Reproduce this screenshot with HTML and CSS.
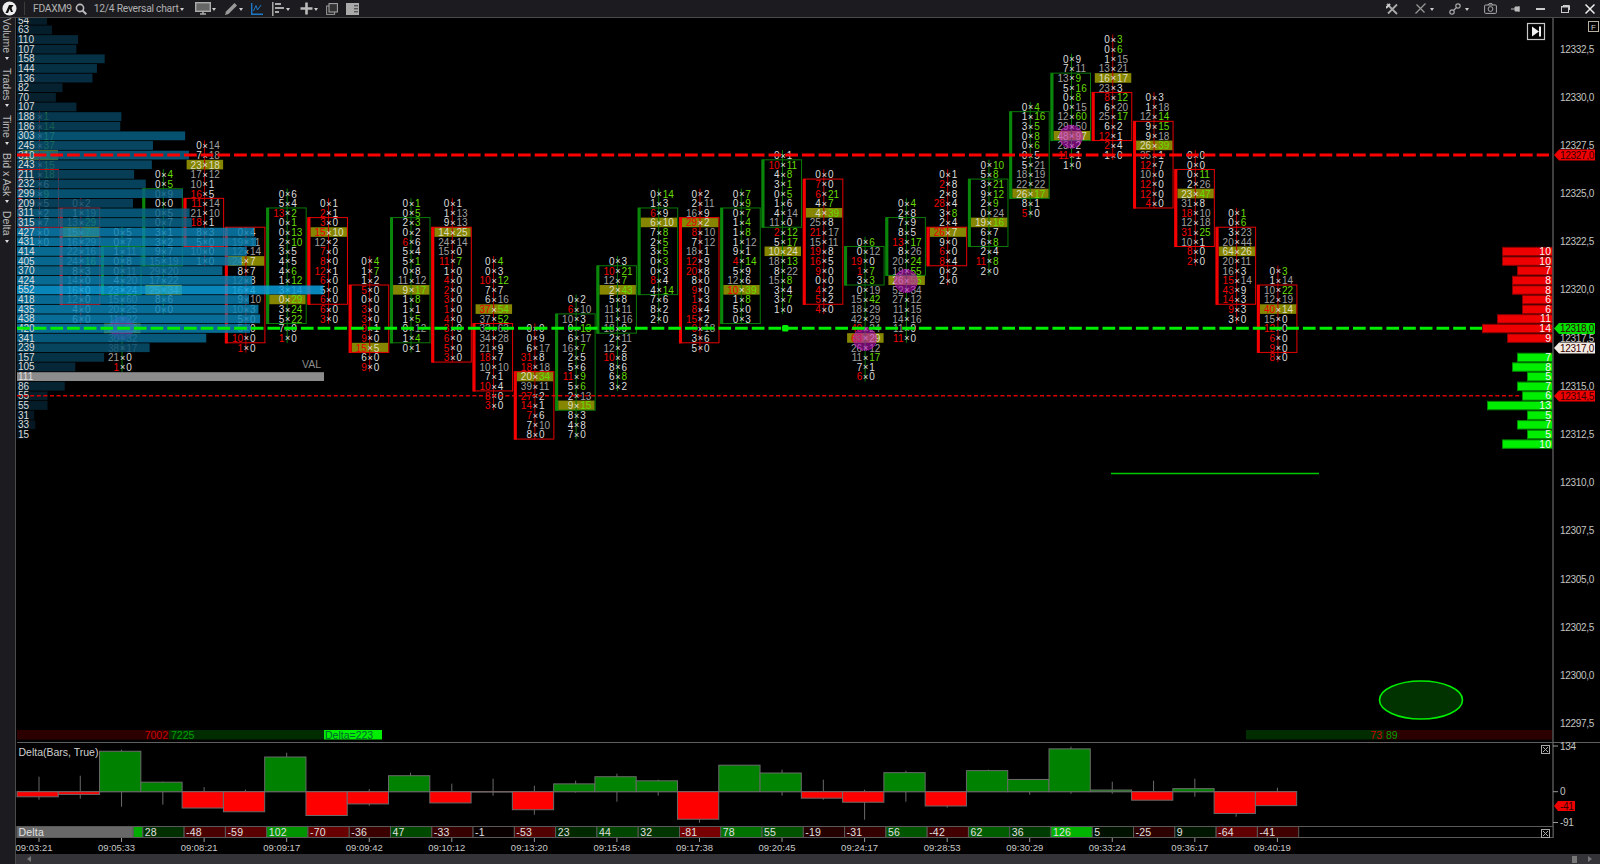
FILE: index.html
```html
<!DOCTYPE html>
<html lang="en">
<head>
    <meta charset="UTF-8">
    <title>FDAXM9 - 12/4 Reversal chart</title>
    <link rel="stylesheet" href="styles.css">
</head>
<body>

    <!-- Top toolbar -->
    <div class="toolbar">
        <svg class="logo" width="15" height="15" viewBox="0 0 15 15"><circle cx="7.5" cy="7.5" r="7" fill="#eee"/><path d="M3.5 12 L7 4 H11.5 L9.5 7 L11 11 H9 L7.7 8 L6 12 Z" fill="#111"/></svg>
        <span class="divider"></span>
        <span class="symbol">FDAXM9</span>
        <svg class="ic-search" width="12" height="12" viewBox="0 0 12 12"><circle cx="5" cy="5" r="3.6" fill="none" stroke="#bbb" stroke-width="1.6"/><path d="M7.5 7.5 L11.3 11.3" stroke="#bbb" stroke-width="2"/></svg>
        <span class="chart-type">12/4 Reversal chart</span><i class="caret"></i>
        <svg class="ic-monitor" width="16" height="13" viewBox="0 0 16 13"><rect x="0.7" y="0.7" width="14.6" height="8.6" fill="#666" stroke="#aaa" stroke-width="1.4"/><path d="M5 12 H11 M8 10 V12" stroke="#aaa" stroke-width="1.6"/></svg><i class="caret"></i>
        <svg class="ic-pencil" width="14" height="14" viewBox="0 0 14 14"><path d="M1 13 L2 9.5 L10.5 1 L13 3.5 L4.5 12 Z" fill="#999"/></svg><i class="caret"></i>
        <svg class="ic-chart" width="12" height="12" viewBox="0 0 12 12"><path d="M0.7 0 V11.3 H12" fill="none" stroke="#1e78c8" stroke-width="1.4"/><path d="M2.5 8 L5 2.5 L6.5 7 L10 2" fill="none" stroke="#1e78c8" stroke-width="1"/></svg>
        <svg class="ic-align" width="13" height="14" viewBox="0 0 13 14"><path d="M0.8 0 V14" stroke="#aaa" stroke-width="1.5"/><path d="M3 2 H9 M3 6 H12 M3 10 H7" stroke="#aaa" stroke-width="2"/></svg><i class="caret"></i>
        <svg class="ic-plus" width="13" height="13" viewBox="0 0 13 13"><path d="M6.5 0.5 V12.5 M0.5 6.5 H12.5" stroke="#bbb" stroke-width="2.6"/></svg><i class="caret"></i>
        <svg class="ic-copy" width="12" height="12" viewBox="0 0 12 12"><rect x="0.6" y="3" width="8" height="8.4" fill="#222" stroke="#999"/><rect x="3" y="0.6" width="8.4" height="8.4" fill="#333" stroke="#aaa"/></svg>
        <svg class="ic-panel" width="13" height="12" viewBox="0 0 13 12"><rect width="13" height="12" fill="#aaa"/><rect x="8" y="2" width="4" height="1.4" fill="#555"/><rect x="8" y="5" width="4" height="1.4" fill="#555"/><rect x="8" y="8" width="4" height="1.4" fill="#555"/></svg>

        <span class="toolbar-right">
            <svg class="ic-tools" width="12" height="12" viewBox="0 0 12 12"><path d="M1 1 L11 11 M11 1.5 L2 10.5" stroke="#aaa" stroke-width="1.8"/><path d="M0 5 L4 1" stroke="#ccc" stroke-width="2"/></svg>
            <svg class="ic-cross" width="11" height="11" viewBox="0 0 11 11"><path d="M0.5 10.5 L10.5 0.5 M1.5 1.5 L9.5 9.5" stroke="#999" stroke-width="1.2"/></svg><i class="caret"></i>
            <svg class="ic-link" width="12" height="12" viewBox="0 0 12 12"><circle cx="3" cy="9" r="2.2" fill="none" stroke="#aaa" stroke-width="1.2"/><circle cx="9" cy="3" r="2.2" fill="none" stroke="#aaa" stroke-width="1.2"/><path d="M4.5 7.5 L7.5 4.5" stroke="#aaa" stroke-width="1.2"/></svg><i class="caret"></i>
            <svg class="ic-camera" width="13" height="11" viewBox="0 0 13 11"><rect x="0.6" y="2" width="11.8" height="8.4" rx="1" fill="none" stroke="#aaa"/><circle cx="6.5" cy="6" r="2.4" fill="none" stroke="#aaa"/><path d="M4 2 L5 0.6 H8 L9 2" fill="none" stroke="#aaa"/></svg>
            <svg class="ic-pin" width="10" height="6" viewBox="0 0 10 6"><path d="M0 3 H4 M4 1 H8 V5 H4 Z M8 0 V6" stroke="#bbb" fill="#bbb"/></svg>
            <span class="win-min"></span>
            <svg class="ic-restore" width="9" height="8" viewBox="0 0 9 8"><rect x="0.5" y="1.5" width="7" height="6" fill="none" stroke="#ccc"/><path d="M0.5 2 H7.5 M2 0.5 H8.5 V5" fill="none" stroke="#ccc"/></svg>
            <svg class="ic-close" width="10" height="10" viewBox="0 0 10 10"><path d="M0.5 0.5 L9.5 9.5 M9.5 0.5 L0.5 9.5" stroke="#eee" stroke-width="1.5"/></svg>
        </span>
    </div>

    <div class="workspace">
        <!-- Left vertical tabs -->
        <div class="sidebar">
            <span class="tab tab-volume">Volume</span><i class="caret"></i>
            <span class="tab">Trades</span><i class="caret"></i>
            <span class="tab">Time</span><i class="caret"></i>
            <span class="tab">Bid x Ask</span><i class="caret"></i>
            <span class="tab">Delta</span><i class="caret"></i>
        </div>

        <div class="main">
            <!-- viewBoxes use page coordinates, script.js draws into them -->
            <svg id="chart" class="chart" viewBox="16 18 1584 724" width="1584" height="724"></svg>
            <svg id="delta" class="delta" viewBox="16 742 1584 96" width="1584" height="96"></svg>
            <svg id="timeaxis" class="timeaxis" viewBox="16 838 1584 16" width="1584" height="16"></svg>
            <div class="scrollbar">
                <i class="arrow-left"></i>
                <span class="scroll-thumb"></span>
                <i class="arrow-right"></i>
            </div>
        </div>
    </div>

    <script src="script.js"></script>
</body>
</html>
```

FILE: styles.css
```css
/* Base page */
html, body {
    margin: 0;
    padding: 0;
    height: 864px;
    overflow: hidden;
    background-color: #000;
    font-family: "Liberation Sans", Arial, sans-serif;
}

/* Toolbar */
.toolbar {
    display: flex;
    align-items: center;
    height: 17px;
    background-color: #1c1c20;
    border-bottom: 1px solid #4a4a4a;
    color: #b0b0b0;
    padding-left: 2px;
}
.divider {
    width: 1px;
    height: 13px;
    background-color: #3c3c3c;
    margin-left: 7px;
}
.symbol, .chart-type {
    font-family: Roboto, sans-serif;
    font-size: 10.3px;
    letter-spacing: -0.25px;
}
.symbol { margin-left: 8px; }
.ic-search { margin-left: 3px; }
.chart-type { margin-left: 7px; }
.caret {
    width: 0;
    height: 0;
    border-left: 2.5px solid transparent;
    border-right: 2.5px solid transparent;
    border-top: 3px solid #ccc;
    margin-left: 1px;
    margin-top: 2px;
}
.ic-monitor { margin-left: 11px; }
.ic-pencil { margin-left: 8px; }
.ic-chart { margin-left: 8px; }
.ic-align { margin-left: 9px; }
.ic-plus { margin-left: 10px; }
.ic-copy { margin-left: 8px; }
.ic-panel { margin-left: 8px; }
.toolbar-right {
    display: flex;
    align-items: center;
    margin-left: auto;
    padding-right: 5px;
}
.ic-cross { margin-left: 17px; }
.ic-cross + .caret { margin-left: 4px; }
.ic-link { margin-left: 15px; }
.ic-link + .caret { margin-left: 4px; }
.ic-camera { margin-left: 15px; }
.ic-pin { margin-left: 14px; }
.win-min {
    width: 9px;
    height: 2px;
    background-color: #ccc;
    margin-left: 15px;
}
.ic-restore { margin-left: 16px; }
.ic-close { margin-left: 15px; }

/* Layout under the toolbar */
.workspace {
    display: flex;
    height: 846px;
}
.sidebar {
    display: flex;
    flex-direction: column;
    align-items: center;
    flex: none;
    width: 16px;
    padding-right: 2px;
    box-sizing: border-box;
    background-color: #1c1c20;
    border-right: 1px solid #4a4a4a;
}
.tab {
    writing-mode: vertical-rl;
    font-size: 10.5px;
    color: #b8b8b8;
    margin-top: 8px;
}
.tab-volume { margin-top: 0; }
.sidebar .caret {
    border-top-color: #ddd;
    margin: 4px 0 0;
}
.main {
    display: flex;
    flex-direction: column;
    width: 1584px;
}
.chart, .delta, .timeaxis { display: block; }
.scrollbar {
    display: flex;
    align-items: center;
    height: 10px;
    background-color: #333338;
}
.arrow-left {
    border-top: 3.5px solid transparent;
    border-bottom: 3.5px solid transparent;
    border-right: 4px solid #777;
    margin-left: 11px;
}
.scroll-thumb {
    width: 5px;
    height: 7px;
    background-color: #777;
    margin-left: auto;
}
.arrow-right {
    border-top: 3.5px solid transparent;
    border-bottom: 3.5px solid transparent;
    border-left: 4px solid #777;
    margin: 0 8px 0 11px;
}

/* Chart text */
text { font-family: "Liberation Sans", Arial, sans-serif; }
.num { font-size: 10px; fill: #dcdcdc; }
.num-dim { fill: #a0a0a0; }
.num-hi { fill: #dcdcc0; }
.num-red { fill: #f00000; }
.num-lime { fill: #66dd00; }
.cross { font-size: 9px; fill: #e0e0e0; }
.wick-g { stroke: #0a7a0a; }
.wick-r { stroke: #c00000; }
.box-g { fill: none; stroke: #0a7a0a; }
.box-r { fill: none; stroke: #e80000; }
.bar-g { fill: #0a860a; }
.bar-r { fill: #f40000; }
.hi { fill: #868600; }
.poc { fill: rgba(190, 20, 190, 0.58); stroke: #c818c8; stroke-dasharray: 1 1; }

.profile-label { font-size: 10px; fill: #dcdcdc; }
.val { font-size: 10.5px; fill: #8c8c8c; }
.line-red { stroke: #ff0000; stroke-width: 3.2; stroke-dasharray: 12.7 4; }
.line-green { stroke: #00ee00; stroke-width: 3; stroke-dasharray: 12.7 4; }
.line-thin { stroke: #d80000; stroke-width: 1.6; stroke-dasharray: 4 2.6; }
.line-draw { stroke: #00c800; stroke-width: 1.6; }
.oval { fill: #003300; stroke: #00ee00; stroke-width: 1.6; }

.axis-line { stroke: #5a5a5a; stroke-width: 1.4; }
.axis-label { font-size: 10px; letter-spacing: -0.3px; fill: #c4c4c0; }
.tag-text { font-size: 10px; letter-spacing: -0.3px; fill: #300; }
.tag-red { fill: #ee0000; }
.tag-green { fill: #00e000; }
.tag-white { fill: #f3ece4; }
.vol-red { fill: #ee0000; stroke: #8a0000; }
.vol-green { fill: #00ee00; stroke: #008a00; }
.vol-text { font-size: 10.5px; fill: #f4f4f4; text-anchor: end; }

.sum-red { fill: #2c0000; }
.sum-green { fill: #002c00; }
.sum-delta { fill: #00ee00; }
.sum-text { font-size: 10.5px; }
.sum-text-red { fill: #cc0000; }
.sum-text-green { fill: #00a000; }
.sum-text-dark { fill: #063; }
.btn-frame { fill: #000; stroke: #c8c8c8; stroke-width: 1.2; }
.btn-glyph { fill: #f0f0f0; }
.f-frame { fill: #000; stroke: #b8b0a0; }
.f-text { font-size: 8px; fill: #ccc; }

/* Delta panel */
.sep { stroke: #606060; stroke-width: 1; }
.panel-title { font-size: 10.5px; fill: #d0d0d0; }
.dbar { stroke: #6a6a6a; stroke-width: 1; }
.dwick { stroke: #6a6a6a; stroke-width: 1; }
.cell { stroke: #5a5a5a; stroke-width: 1; }
.cell-label { fill: #686868; }
.cell-text { font-size: 10.5px; letter-spacing: 0.2px; fill: #e0e0e0; }
.close-frame { fill: #000; stroke: #aaa; }
.close-x { stroke: #aaa; }

.tick { stroke: #999; }
.time-label { font-size: 9.5px; fill: #c8c8c8; text-anchor: middle; }
```

FILE: script.js
```js
var NS = "http://www.w3.org/2000/svg";
var chart = document.getElementById("chart");
var delta = document.getElementById("delta");
var timeaxis = document.getElementById("timeaxis");

function add(parent, tag, cls, attrs, label) {
    var node = document.createElementNS(NS, tag);
    if (cls) node.setAttribute("class", cls);
    for (var k in attrs) node.setAttribute(k, attrs[k]);
    if (label !== undefined) node.textContent = label;
    parent.appendChild(node);
    return node;
}

// row n sits 9.63px under the 12327,0 level
function rowY(n) { return 155 + 9.63 * n; }
function colX(i) { return 39 + 41.28 * i; }

// [direction, first row, box top, box bottom, highlighted row, "bid/ask" per row]
// r and g in front of a number mean a red or lime number
var columns = [
    ["r", -4, 1.5, 7.5, 0, "/g1 /g14 /g17 /g37 /g3 /g15 /g18 /6 /g9 /5 /2 /7 /0 /0"],
    ["r", 5, 5.5, 15.5, 8, "0/2 1/19 13/g29 15/g7 16/29 22/16 24/g16 8/3 14/0 16/0 12/0 4/0 6/0"],
    ["g", 8, 9.5, 14.5, 18, "0/5 0/7 1/11 0/8 0/11 4/20 23/24 15/60 20/25 11/22 38/29 30/32 38/17 21/0 r1/0"],
    ["g", 2, 3.5, 11.5, 14, "0/g4 0/g5 0/9 0/0 0/5 0/7 3/1 3/2 9/7 15/19 29/20 17/22 25/34 8/6 0/0"],
    ["r", -1, 4.5, 9.5, 1, "0/14 7/18 23/18 17/12 10/1 r16/5 r11/14 21/10 r18/1 8/3 5/0 10/0 1/0"],
    ["r", 8, 7.5, 19.5, 11, "0/4 19/11 12/14 24/7 8/7 12/8 16/4 9/10 10/3 5/0 5/0 r10/0 r1/0"],
    ["g", 4, 5.5, 17.5, 15, "0/6 5/4 r13/g2 0/g1 0/g13 2/g10 3/5 4/5 4/g6 1/g12 3/14 0/g29 3/g24 5/g22 7/0 r1/0"],
    ["r", 5, 6.5, 15.5, 8, "0/1 r2/1 r3/0 r15/10 12/2 r7/0 r8/0 r12/1 r6/0 5/0 r6/0 r6/0 r3/0"],
    ["r", 11, 13.5, 20.5, 20, "0/g4 1/g7 1/2 r5/0 0/0 r3/0 r3/0 r9/1 r9/0 r15/5 6/0 r9/0"],
    ["g", 5, 6.5, 19.5, 14, "0/g1 0/g5 2/g3 0/2 r6/6 5/4 5/g1 0/8 11/12 9/g17 1/g8 1/1 1/g5 0/12 1/g4 0/1"],
    ["r", 5, 7.5, 21.5, 8, "0/1 1/13 9/13 14/25 24/14 15/0 r11/g7 1/0 r4/0 r2/0 r3/0 r1/0 r4/0 r3/0 r6/0 r5/0 r3/0"],
    ["r", 11, 17.5, 24.5, 16, "0/g4 0/3 r10/g12 7/7 6/16 r37/g54 37/g52 33/63 34/28 21/9 r18/7 10/10 7/1 r10/4 r8/0 r3/0"],
    ["r", 18, 22.5, 29.5, 23, "0/0 0/9 6/17 r31/8 r18/18 20/g34 39/11 r27/2 r14/1 r7/6 7/10 8/0"],
    ["g", 15, 16.5, 26.5, 26, "0/2 r6/10 10/3 0/g13 6/17 16/g7 2/5 5/6 r11/g9 5/g6 2/13 9/g15 8/3 4/8 7/0"],
    ["g", 11, 11.5, 18.5, 14, "0/3 r10/g21 12/g7 2/g43 5/8 11/11 11/16 18/9 2/11 12/2 r10/8 8/6 6/g8 3/2"],
    ["g", 4, 5.5, 14.5, 7, "0/g14 1/3 r6/9 6/10 7/g8 2/g5 3/g5 0/g3 0/3 r8/4 4/g14 7/6 8/2 2/0"],
    ["r", 4, 6.5, 19.5, 7, "0/2 2/11 16/9 r29/2 r8/10 7/12 18/1 r12/9 r20/8 8/0 r9/0 r1/3 r8/4 r15/2 r9/18 3/6 5/0"],
    ["g", 4, 5.5, 17.5, 14, "0/g7 0/g9 0/g7 1/g4 1/g8 1/12 9/1 r4/g14 5/9 12/6 r10/g39 1/g8 5/0 0/3"],
    ["g", 0, 0.5, 7.5, 10, "0/1 r10/g11 4/g8 3/g1 0/g5 1/6 4/14 11/0 r2/g12 5/g17 10/24 18/g13 8/22 15/g8 3/4 3/g7 1/0"],
    ["r", 2, 2.5, 15.5, 6, "0/0 r7/0 r6/g21 4/g7 4/g39 25/8 r21/17 15/11 r19/8 r16/5 r9/0 0/0 r4/2 r5/2 r4/0"],
    ["g", 9, 9.5, 13.5, 19, "0/g6 0/12 r19/0 r1/g7 3/g3 0/19 15/g42 18/29 42/29 r40/24 r63/29 26/12 11/g17 7/1 r6/0"],
    ["g", 5, 6.5, 12.5, 13, "0/g4 2/8 7/9 8/5 r13/g17 8/26 20/g24 19/g55 26/g55 52/34 27/12 11/15 14/16 11/9 r11/0"],
    ["r", 2, 7.5, 11.5, 8, "0/1 r2/8 2/8 r28/4 3/g8 2/4 r26/7 9/0 r6/0 r8/4 0/2 2/0"],
    ["g", 1, 2.5, 9.5, 7, "0/g10 5/g8 3/g21 9/g12 2/g9 0/24 19/g16 6/7 6/g8 2/4 r11/g8 2/0"],
    ["g", -5, -4.5, 4.5, 4, "0/g4 1/g16 3/g5 0/g8 0/g6 0/5 5/21 18/19 22/22 26/g17 8/1 r5/0"],
    ["g", -10, -8.5, -1.5, -2, "0/9 7/11 13/g9 5/g16 0/g8 0/15 12/g60 29/50 48/97 23/2 r11/1 1/0"],
    ["r", -12, -6.5, -1.5, -8, "0/g3 0/g6 1/15 13/21 16/17 23/3 r8/g12 6/20 25/g17 6/2 r12/1 r2/4 1/0"],
    ["r", -6, -3.5, 5.5, -1, "0/3 1/18 12/g14 9/g15 9/18 26/g39 35/1 r12/7 10/0 r12/0 r12/0 r4/0"],
    ["r", 0, 1.5, 9.5, 4, "0/0 0/0 0/g11 2/26 23/g47 31/8 r18/10 12/18 r31/g25 10/1 r8/0 r2/0"],
    ["r", 6, 7.5, 15.5, 10, "0/g1 0/g6 3/23 20/44 64/26 20/11 16/3 r15/14 r43/9 r14/3 r9/3 3/0"],
    ["r", 12, 13.5, 20.5, 16, "0/g3 1/14 10/g22 12/19 r40/14 15/0 r12/0 r6/0 r9/0 r8/0"]
];

// number with its colour class
function addNum(g, token, x, y, anchor, isHi) {
    if (token === "") return;
    var cls = "num";
    var value = token;
    if (token[0] === "r") { cls += " num-red"; value = token.slice(1); }
    else if (token[0] === "g") { cls += " num-lime"; value = token.slice(1); }
    else if (isHi) { cls += " num-hi"; }
    else if (parseInt(token) >= 10) { cls += " num-dim"; }
    add(g, "text", cls, { x: x, y: y, "text-anchor": anchor }, value);
}

function drawColumn(col, i) {
    var g = add(chart, "g", "column");
    var cx = colX(i);
    var rows = col[5].split(" ");
    var first = col[1];
    var dir = col[0];
    var left = cx - 20.5;
    var right = cx + 19;

    // highlighted row under everything
    var hiY = rowY(col[4]);
    add(g, "rect", "hi", { x: cx - 17.5, y: hiY - 4.8, width: 36.5, height: 9.6 });

    // wick
    add(g, "line", "wick-" + dir, {
        x1: cx + 0.5, x2: cx + 0.5,
        y1: rowY(first) - 5, y2: rowY(first + rows.length - 1) + 5
    });

    // body
    var top = rowY(col[2]);
    var bottom = rowY(col[3]);
    add(g, "rect", "box-" + dir, { x: left + 0.5, y: top, width: right - left, height: bottom - top });
    add(g, "rect", "bar-" + dir, { x: left, y: top, width: 3, height: bottom - top + 0.5 });

    for (var r = 0; r < rows.length; r++) {
        var y = rowY(first + r) + 4;
        var parts = rows[r].split("/");
        var isHi = first + r === col[4];
        addNum(g, parts[0], cx - 2.4, y, "end", isHi);
        add(g, "text", "cross", { x: cx + 1, y: y - 0.5, "text-anchor": "middle" }, "\u00d7");
        addNum(g, parts[1], cx + 4.6, y, "start", isHi);
    }
}

// purple marks, they go on top of the columns but under the profile
function drawMarks() {
    var marks = [[122, 328], [865, 339], [906, 281], [1071, 136.7]];
    marks.forEach(function (m) {
        add(chart, "circle", "poc", { cx: m[0], cy: m[1], r: 11.5 });
    });
}

var profile = [54, 63, 110, 107, 158, 144, 136, 82, 70, 107, 188, 186, 303, 245, 310, 243, 211, 232, 299, 209,
    311, 315, 427, 431, 414, 405, 370, 424, 552, 418, 435, 438, 420, 341, 239, 157, 105, 111, 86, 55, 55, 31, 33, 15];

function drawProfile() {
    var first = -14;
    var valRow = 23;
    profile.forEach(function (v, k) {
        var n = first + k;
        var y = rowY(n);
        var t = v / 552;
        var fill = "rgba(" + Math.round(6 + 4 * t) + "," + Math.round(20 + 140 * t) + "," + Math.round(30 + 190 * t) + ",0.84)";
        var width = v * 0.555;
        if (n === valRow) {
            fill = "#8c8c8c";
            width = 307;
        }
        add(chart, "rect", "", { x: 17, y: y - 4.3, width: width, height: 8.8, fill: fill });
    });
    profile.forEach(function (v, k) {
        add(chart, "text", "profile-label", { x: 18, y: rowY(first + k) + 3.6 }, v);
    });
    add(chart, "text", "val", { x: 302, y: 368 }, "VAL");
}

function drawLevels() {
    add(chart, "line", "line-red", { x1: 17, x2: 1549, y1: rowY(0), y2: rowY(0) });
    add(chart, "line", "line-green", { x1: 17, x2: 1483, y1: 328.3, y2: 328.3 });
    add(chart, "line", "line-thin", { x1: 17, x2: 1522, y1: 395.8, y2: 395.8 });
    add(chart, "rect", "", { x: 782, y: 325, width: 6.5, height: 6.5, rx: 1.5, fill: "#00ee00" });
    add(chart, "line", "line-draw", { x1: 1111, x2: 1319, y1: 473.5, y2: 473.5 });
    add(chart, "ellipse", "oval", { cx: 1421, cy: 700, rx: 41.5, ry: 19 });
}

// volume bars at the right side of the chart
function drawRightVolume() {
    var red = [10, 10, 7, 8, 8, 6, 6, 11, 14, 9];
    var green = [7, 8, 5, 7, 6, 13, 5, 7, 5, 10];
    function bar(v, n, cls) {
        var y = rowY(n);
        add(chart, "rect", cls, { x: 1552.5 - v * 5, y: y - 4, width: v * 5, height: 8.4 });
        add(chart, "text", "vol-text", { x: 1551, y: y + 3.7 }, v);
    }
    red.forEach(function (v, k) { bar(v, 10 + k, "vol-red"); });
    green.forEach(function (v, k) { bar(v, 21 + k, "vol-green"); });
}

function drawTag(y, label, cls) {
    var pts = "1554," + y + " 1559," + (y - 5.5) + " 1595," + (y - 5.5) + " 1595," + (y + 5.5) + " 1559," + (y + 5.5);
    add(chart, "polygon", cls, { points: pts });
    add(chart, "text", "tag-text", { x: 1560, y: y + 3.6 }, label);
}

function drawPriceAxis() {
    add(chart, "line", "axis-line", { x1: 1553, x2: 1553, y1: 18, y2: 742 });
    var labels = [["12332,5", 49], ["12330,0", 97], ["12327,5", 145], ["12325,0", 193], ["12322,5", 241],
        ["12320,0", 289.5], ["12317,5", 338], ["12315,0", 386], ["12312,5", 434], ["12310,0", 482],
        ["12307,5", 530.5], ["12305,0", 579], ["12302,5", 627], ["12300,0", 675], ["12297,5", 723]];
    labels.forEach(function (l) {
        add(chart, "text", "axis-label", { x: 1560, y: l[1] + 3.6 }, l[0]);
    });
    drawTag(155, "12327,0", "tag-red");
    drawTag(328.5, "12318,0", "tag-green");
    drawTag(348, "12317,0", "tag-white");
    drawTag(396, "12314,5", "tag-red");
}

function drawSummary() {
    add(chart, "rect", "sum-red", { x: 17, y: 730, width: 152, height: 9.5 });
    add(chart, "rect", "sum-green", { x: 169, y: 730, width: 155, height: 9.5 });
    add(chart, "rect", "sum-delta", { x: 324, y: 730, width: 58, height: 9.5 });
    add(chart, "text", "sum-text sum-text-red", { x: 168, y: 739, "text-anchor": "end" }, "7002");
    add(chart, "text", "sum-text sum-text-green", { x: 171, y: 739 }, "7225");
    add(chart, "text", "sum-text sum-text-dark", { x: 325, y: 739 }, "Delta=223");

    add(chart, "rect", "sum-green", { x: 1246, y: 730, width: 138, height: 9.5 });
    add(chart, "rect", "sum-red", { x: 1384, y: 730, width: 168, height: 9.5 });
    add(chart, "text", "sum-text sum-text-red", { x: 1382, y: 739, "text-anchor": "end" }, "73");
    add(chart, "text", "sum-text sum-text-green", { x: 1386, y: 739 }, "89");
}

function drawButtons() {
    add(chart, "rect", "btn-frame", { x: 1527.5, y: 23.5, width: 17, height: 16 });
    add(chart, "polygon", "btn-glyph", { points: "1532,26.5 1539,31.5 1532,36.5" });
    add(chart, "rect", "btn-glyph", { x: 1539, y: 26.5, width: 2, height: 10 });
    add(chart, "rect", "f-frame", { x: 1588.5, y: 21.5, width: 10, height: 10 });
    add(chart, "text", "f-text", { x: 1591, y: 29.5 }, "F");
}

// delta indicator: [value, wick above zero, wick below zero]
var deltaBars = [[-15, 15, 8], [-8, 16, 7], [119, 42, 15], [28, 10, 13], [-48, 4.5, 0], [-59, 2, 0], [102, 39, 0],
    [-70, 0, 0], [-36, 2.5, 14], [47, 19, 0], [-33, 8, 0], [-1, 13, 4], [-53, 6, 23], [23, 11, 1], [44, 18, 10],
    [32, 12, 4], [-81, 0, 31], [78, 0, 0], [55, 22, 4], [-19, 12, 8], [-31, 2, 28], [56, 21, 10], [-42, 0, 16],
    [62, 22, 0], [36, 0, 3], [126, 45, 2], [5, 10, 2], [-25, 11, 0], [9, 13, 5], [-64, 0, 25], [-41, 4, 0]];

function drawCloseBox(x, y) {
    add(delta, "rect", "close-frame", { x: x + 0.5, y: y + 0.5, width: 8, height: 8 });
    add(delta, "path", "close-x", { d: "M" + (x + 2) + " " + (y + 2) + " l5 5 m0 -5 l-5 5" });
}

function cellColor(v) {
    var level = Math.round(10 + Math.abs(v) * 1.35);
    return v > 0 ? "rgb(0," + level + ",0)" : "rgb(" + level + ",0,0)";
}

function drawDelta() {
    var zero = 791.7;
    var k = 0.34;
    var step = 41.28;

    add(delta, "line", "sep", { x1: 17, x2: 1600, y1: 742.5, y2: 742.5 });
    add(delta, "line", "axis-line", { x1: 1553, x2: 1553, y1: 743, y2: 838 });
    add(delta, "line", "dwick", { x1: 17, x2: 1297, y1: zero, y2: zero });

    deltaBars.forEach(function (b, i) {
        var x = 17 + step * i;
        var cx = colX(i);
        add(delta, "line", "dwick", { x1: cx, x2: cx, y1: zero - b[1], y2: zero + b[2] });
        var h = Math.abs(b[0]) * k;
        add(delta, "rect", "dbar", {
            x: x, y: b[0] > 0 ? zero - h : zero, width: step, height: h,
            fill: b[0] > 0 ? "#008200" : "#ff0000"
        });
    });

    add(delta, "text", "panel-title", { x: 18.5, y: 756 }, "Delta(Bars, True)");
    drawCloseBox(1541, 745);

    // value row
    add(delta, "rect", "cell", { x: 17, y: 826.5, width: 1536, height: 11, fill: "#000" });
    deltaBars.forEach(function (b, i) {
        if (i < 2) return;
        var x = i === 2 ? 133 : 19 + step * i;
        var width = i === 2 ? 10 : step;
        add(delta, "rect", "cell", { x: x, y: 826.5, width: width, height: 11, fill: cellColor(b[0]) });
        if (i > 2) add(delta, "text", "cell-text", { x: x + 2, y: 836 }, b[0]);
    });
    add(delta, "rect", "cell cell-label", { x: 17, y: 826.5, width: 116, height: 11 });
    add(delta, "text", "cell-text", { x: 18.5, y: 836 }, "Delta");
    drawCloseBox(1541, 829);

    // delta axis
    [["134", 746], ["0", 791.7], ["-91", 822.5]].forEach(function (a) {
        add(delta, "line", "tick", { x1: 1553, x2: 1558, y1: a[1], y2: a[1] });
        add(delta, "text", "axis-label", { x: 1560, y: a[1] + 3.6 }, a[0]);
    });
    add(delta, "polygon", "tag-red", { points: "1554,806 1558,801 1575,801 1575,811 1558,811" });
    add(delta, "text", "tag-text", { x: 1560, y: 809.5 }, "-41");
}

function drawTimes() {
    var times = ["09:03:21", "09:05:33", "09:08:21", "09:09:17", "09:09:42", "09:10:12", "09:13:20", "09:15:48",
        "09:17:38", "09:20:45", "09:24:17", "09:28:53", "09:30:29", "09:33:24", "09:36:17", "09:40:19"];
    times.forEach(function (t, k) {
        var x = colX(k * 2);
        add(timeaxis, "line", "tick", { x1: x, x2: x, y1: 838, y2: 842 });
        add(timeaxis, "text", "time-label", { x: x - 5, y: 851 }, t);
    });
}

columns.forEach(drawColumn);
drawMarks();
drawProfile();
drawLevels();
drawRightVolume();
drawPriceAxis();
drawSummary();
drawButtons();
drawDelta();
drawTimes();
```
